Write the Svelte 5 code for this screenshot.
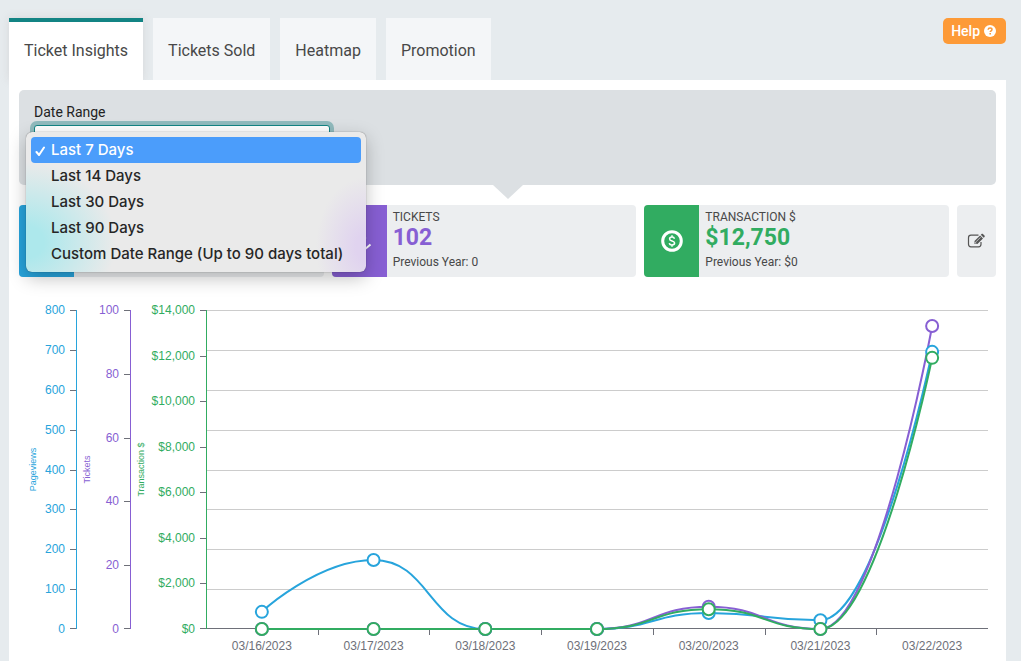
<script>
  const tabs = ['Ticket Insights', 'Tickets Sold', 'Heatmap', 'Promotion']
  const ranges = [
    'Last 7 Days',
    'Last 14 Days',
    'Last 30 Days',
    'Last 90 Days',
    'Custom Date Range (Up to 90 days total)'
  ]
  const dates = [
    '03/16/2023',
    '03/17/2023',
    '03/18/2023',
    '03/19/2023',
    '03/20/2023',
    '03/21/2023',
    '03/22/2023'
  ]

  const axes = [
    { name: 'Pageviews', color: '#27a4dc', max: 800, step: 100, offset: 130, nameGap: 40 },
    { name: 'Tickets', color: '#875fd3', max: 100, step: 20, offset: 76, nameGap: 40 },
    { name: 'Transaction $', color: '#31ac61', max: 14000, step: 2000, offset: 0, nameGap: 62, money: true }
  ]
  const series = [
    [43, 173, 0, 0, 40, 22, 695],
    [0, 0, 0, 0, 7, 0, 95],
    [0, 0, 0, 0, 870, 0, 11900]
  ]

  const cards = [
    { id: 'pageviews', color: '#27a4dc' },
    { id: 'tickets', title: 'TICKETS', value: '102', previous: '0', color: '#875fd3' },
    { id: 'money', title: 'TRANSACTION $', value: '$12,750', previous: '$0', color: '#31ac61' }
  ]

  let activeTab = $state('Ticket Insights')
  let range = $state('Last 7 Days')
  let open = $state(true)
  let chartWidth = $state(960)

  const left = 187
  const top = 10
  const plotHeight = 319
  const bottom = top + plotHeight

  let right = $derived(chartWidth - 8)
  let band = $derived((right - left) / dates.length)
  let lines = $derived(
    series.map((values, i) =>
      values.map((v, n) => ({
        x: left + band * (n + 0.5),
        y: bottom - (v / axes[i].max) * plotHeight
      }))
    )
  )

  const snap = (n) => Math.round(n) + 0.5
  const snapY = (n) => Math.min(snap(n), bottom - 0.5)

  const ticks = (axis) => {
    const list = []
    for (let v = 0; v <= axis.max; v += axis.step) {
      list.push({
        y: bottom - (v / axis.max) * plotHeight,
        label: axis.money ? '$' + v.toLocaleString('en-US') : String(v)
      })
    }
    return list
  }

  const clamp = (n, a, b) => Math.min(Math.max(n, Math.min(a, b)), Math.max(a, b))

  // smooth line whose control points never leave the box of their two points
  const smoothPath = (pts) => {
    const last = pts.length - 1
    let d = `M${pts[0].x},${pts[0].y}`
    let out = pts[0]
    for (let i = 1; i <= last; i++) {
      const p = pts[i]
      const prev = pts[i - 1]
      let into = p
      let nextOut = p
      if (i < last) {
        const next = pts[i + 1]
        const reach = (next.x - p.x) / 2
        const rise = clamp(p.y + (next.y - prev.y) / 4, p.y, next.y) - p.y
        const intoY = clamp(p.y - rise, prev.y, p.y)
        into = { x: p.x - reach, y: intoY }
        nextOut = { x: p.x + reach, y: 2 * p.y - intoY }
      }
      d += `C${out.x},${out.y} ${into.x},${into.y} ${p.x},${p.y}`
      out = nextOut
    }
    return d
  }

  const pick = (r) => {
    range = r
    open = false
  }

  const openMenu = (e) => {
    e.preventDefault()
    open = !open
  }
</script>

<div class="page">
  <header>
    <nav>
      {#each tabs as tab}
        <button class="tab" class:active={tab === activeTab} onclick={() => (activeTab = tab)}>
          {tab}
        </button>
      {/each}
    </nav>
    <button class="help">
      Help
      <svg width="12" height="12" viewBox="0 0 12 12" aria-hidden="true">
        <circle cx="6" cy="6" r="6" fill="#fff" />
        <path d="M4.1 4.7C4.2 3.5 5 2.9 6.1 2.9c1.100 0 1.900.7 1.900 1.600 0 1.300-1.800 1.300-1.800 2.600" fill="none" stroke="#fd9a37" stroke-width="1.500" />
        <rect x="5.400" y="8" width="1.600" height="1.500" fill="#fd9a37" />
      </svg>
    </button>
  </header>

  <main>
    <section class="filters">
      <label for="range">Date Range</label>
      <div class="picker">
        <select id="range" bind:value={range} onmousedown={openMenu}>
          {#each ranges as r}
            <option>{r}</option>
          {/each}
        </select>
        {#if open}
          <ul class="menu" role="listbox" aria-label="Date Range">
            {#each ranges as r}
              <li role="option" aria-selected={r === range}>
                <button class:selected={r === range} onclick={() => pick(r)}>
                  <svg width="20" height="12" viewBox="0 0 20 12" aria-hidden="true">
                    {#if r === range}
                      <path d="M5.500 8l2.500 3L13 3.500" />
                    {/if}
                  </svg>
                  {r}
                </button>
              </li>
            {/each}
          </ul>
        {/if}
      </div>
    </section>

    <section class="cards">
      {#each cards as card}
        <article class="card">
          <div class="icon" style:background={card.color}>
            {#if card.id === 'money'}
              <svg width="24" height="24" viewBox="0 0 24 24" aria-hidden="true">
                <circle cx="12" cy="12" r="9.300" fill="none" stroke="#fff" stroke-width="3" />
                <path d="M14.500 9.700C14.200 8.600 13.300 8 12 8c-1.400 0-2.400.7-2.400 1.900 0 2.800 5 1.400 5 4.200 0 1.200-1.100 1.900-2.600 1.900-1.500 0-2.500-.7-2.700-1.900M12 6.300V8M12 16v1.700" fill="none" stroke="#fff" stroke-width="1.500" />
              </svg>
            {:else if card.id === 'tickets'}
              <svg width="26" height="26" viewBox="0 0 26 26" fill="none" stroke="#fff" stroke-width="2" aria-hidden="true">
                <path d="M2 13L12 3l7 7L9 20z" />
                <path d="M12 24.500l6-2.500 6.500-5.500" />
              </svg>
            {:else}
              <svg width="26" height="20" viewBox="0 0 26 20" aria-hidden="true">
                <path d="M2 10Q13-4 24 10 13 24 2 10z" fill="none" stroke="#fff" stroke-width="2" />
                <circle cx="13" cy="10" r="4" fill="#fff" />
              </svg>
            {/if}
          </div>
          {#if card.title}
            <div class="info">
              <h3>{card.title}</h3>
              <strong style:color={card.color}>{card.value}</strong>
              <p>Previous Year: {card.previous}</p>
            </div>
          {/if}
        </article>
      {/each}
      <button class="edit" aria-label="Edit metrics">
        <svg width="18" height="16" viewBox="0 0 18 16" aria-hidden="true">
          <path d="M11.500 2.200H4A2.500 2.500 0 0 0 1.500 4.700v6.600A2.500 2.500 0 0 0 4 13.800h7.500a2.500 2.500 0 0 0 2.500-2.500V9" fill="none" stroke="#555" stroke-width="1.200" />
          <path d="M7.500 11V8.100L13.100 2.500l2.900 2.900L10.400 11zM13.800 1.800l.8-.8c.4-.4.9-.4 1.300 0l1.600 1.600c.4.4.4.9 0 1.300l-.8.8z" fill="#555" />
          <path d="M9 8.800L13.500 4.300M8.300 9v1.200h1.200" fill="none" stroke="#eceef0" stroke-width=".7" />
        </svg>
      </button>
    </section>

    <div class="chart" bind:clientWidth={chartWidth}>
      <svg width={chartWidth} height="362" role="img" aria-label="Pageviews, tickets and transactions by day">
        {#each ticks(axes[0]).slice(1) as t}
          <line class="grid" x1={left} x2={right} y1={snapY(t.y)} y2={snapY(t.y)} />
        {/each}

        <path class="tick" d="M{left},{bottom - 0.5}H{right}" />
        {#each dates as date, i}
          {#if i > 0}
            <path class="tick" d="M{snap(left + band * i)},{bottom}v6" />
          {/if}
          <text class="date" x={left + band * (i + 0.5)} y={bottom + 21}>{date}</text>
        {/each}

        {#each axes as axis}
          {@const x = left - axis.offset}
          {#each ticks(axis) as t}
            <path class="tick" d="M{x - 6},{snapY(t.y)}h6" />
            <text class="value" fill={axis.color} x={x - 11} y={Math.round(t.y) + 4}>{t.label}</text>
          {/each}
          <line x1={x + 0.5} x2={x + 0.5} y1={top} y2={bottom} stroke={axis.color} />
          <text
            class="name"
            fill={axis.color}
            transform="translate({x - axis.nameGap} {top + plotHeight / 2}) rotate(-90)"
          >
            {axis.name}
          </text>
        {/each}

        {#each lines as pts, i}
          <path d={smoothPath(pts)} fill="none" stroke={axes[i].color} stroke-width="2" />
        {/each}
        {#each lines as pts, i}
          {#each pts as p}
            <circle cx={p.x} cy={p.y} r="6" fill="#fff" stroke={axes[i].color} stroke-width="2" />
          {/each}
        {/each}
      </svg>
    </div>
  </main>
</div>

<style>
  :global(body) {
    background: #e6ebee;
  }
  .page {
    box-sizing: border-box;
    min-height: 100vh;
    padding: 18px 15px 0 9px;
    display: flex;
    flex-direction: column;
    font-family: Roboto, sans-serif;
    color: #484848;
  }
  button {
    border: 0;
    padding: 0;
    font: inherit;
    color: inherit;
    cursor: pointer;
  }
  header {
    display: flex;
    justify-content: space-between;
    align-items: flex-start;
  }
  nav {
    display: flex;
    gap: 10px;
  }
  .tab {
    height: 62px;
    padding: 4px 15px 0;
    background: #f4f6f8;
    font-size: 16px;
    line-height: 24px;
  }
  .tab.active {
    background: #fff;
    box-shadow: inset 0 4px #138484, 0 0 8px rgba(180, 170, 170, 0.3);
  }
  .help {
    display: flex;
    align-items: center;
    gap: 4px;
    height: 26px;
    padding: 0 10px 0 8px;
    border-radius: 5px;
    background: #fd9a37;
    color: #fff;
    font-size: 14px;
    font-weight: 500;
  }
  main {
    position: relative;
    flex: 1;
    padding: 10px 10px 0;
    background: #fff;
  }
  .filters {
    position: relative;
    box-sizing: border-box;
    height: 95px;
    padding: 12px 15px;
    border-radius: 5px;
    background: #dce0e3;
  }
  .filters::after {
    content: '';
    position: absolute;
    top: 100%;
    left: 50%;
    border: 15px solid transparent;
    border-top: 14px solid #dce0e3;
    border-bottom: 0;
    transform: translateX(-50%);
  }
  label {
    display: block;
    margin-bottom: 3px;
    font-size: 14px;
    line-height: 20px;
    color: #222;
  }
  .picker {
    position: relative;
    width: 296px;
  }
  select {
    display: block;
    width: 100%;
    height: 38px;
    padding: 0 8px;
    border: 1px solid #138484;
    border-radius: 3px;
    box-shadow: 0 0 0 4px #90babd;
    background: #fff;
    font: inherit;
    font-size: 14px;
  }
  .menu {
    position: absolute;
    z-index: 2;
    top: 7px;
    left: -8px;
    margin: 0;
    padding: 5px;
    border-radius: 6px;
    list-style: none;
    background:
      radial-gradient(ellipse 90px 80px at 0 110px, #ade8ec 20%, transparent),
      radial-gradient(ellipse 50px 70px at 100% 115px, #e0d3ef 20%, transparent),
      #eaeaea;
    box-shadow: 0 0 1px rgba(0, 0, 0, 0.6), 0 6px 18px rgba(0, 0, 0, 0.25);
  }
  .menu button {
    display: flex;
    align-items: center;
    width: 330px;
    height: 26px;
    border-radius: 4px;
    background: none;
    font-family: Inter, sans-serif;
    font-size: 15px;
    font-weight: 500;
    line-height: 20px;
    color: #262626;
    white-space: nowrap;
  }
  .menu .selected {
    background: #4b9dfb;
    color: #fff;
  }
  .menu path {
    fill: none;
    stroke: #fff;
    stroke-width: 2;
    stroke-linecap: round;
  }
  .cards {
    display: grid;
    grid-template-columns: repeat(3, 1fr) 39px;
    gap: 8px;
    margin-top: 20px;
  }
  .card {
    display: flex;
    height: 72px;
    border-radius: 4px;
    overflow: hidden;
    background: #eceef0;
  }
  .icon {
    display: flex;
    align-items: center;
    justify-content: center;
    width: 55px;
  }
  .info {
    padding: 4px 6px;
  }
  h3,
  p {
    margin: 0;
    font-size: 12px;
    font-weight: 400;
    line-height: 16px;
  }
  strong {
    display: block;
    margin-bottom: 3px;
    font-size: 23px;
    line-height: 26px;
  }
  .edit {
    display: flex;
    align-items: center;
    justify-content: center;
    border-radius: 4px;
    background: #eceef0;
  }
  .chart {
    margin-top: 23px;
    overflow: hidden;
  }
  .chart svg {
    display: block;
    font-family: 'Liberation Sans', Arial, sans-serif;
    font-size: 12px;
  }
  .grid {
    stroke: #ccc;
  }
  .tick {
    fill: none;
    stroke: #6e7079;
  }
  .date {
    fill: #6e7079;
    text-anchor: middle;
  }
  .value {
    text-anchor: end;
  }
  .name {
    font-size: 9px;
    text-anchor: middle;
  }
</style>
